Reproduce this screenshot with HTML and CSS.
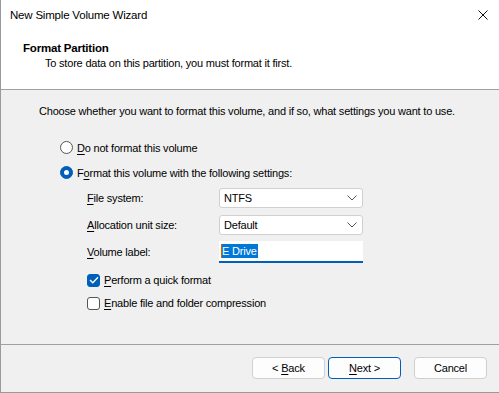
FILE: index.html
```html
<!DOCTYPE html>
<html lang="en">
<head>
  <meta charset="UTF-8" />
  <title>New Simple Volume Wizard</title>
  <link rel="stylesheet" href="styles.css">
</head>
<body>
  <div class="window">
    <div class="titlebar">
      <span class="title">New Simple Volume Wizard</span>
      <span class="close">
        <svg width="10" height="10" viewBox="0 0 10 10"><path d="M0.5 0.5 L9.5 9.5 M9.5 0.5 L0.5 9.5" stroke="#111" stroke-width="1"/></svg>
      </span>
    </div>
    <div class="header">
      <div class="page-title">Format Partition</div>
      <div class="page-sub">To store data on this partition, you must format it first.</div>
    </div>
    <div class="body">
      <p class="intro">Choose whether you want to format this volume, and if so, what settings you want to use.</p>
      <div class="options">
        <label class="radio-row">
          <span class="radio"></span>
          <span><u>D</u>o not format this volume</span>
        </label>
        <label class="radio-row">
          <span class="radio checked"></span>
          <span>F<u>o</u>rmat this volume with the following settings:</span>
        </label>
        <div class="settings">
          <div class="field">
            <span class="field-label"><u>F</u>ile system:</span>
            <div class="combo">NTFS <span class="chev"><svg width="10" height="6" viewBox="0 0 10 6"><path d="M0.5 0.5 L5 5 L9.5 0.5" fill="none" stroke="#555" stroke-width="1"/></svg></span></div>
          </div>
          <div class="field">
            <span class="field-label"><u>A</u>llocation unit size:</span>
            <div class="combo">Default <span class="chev"><svg width="10" height="6" viewBox="0 0 10 6"><path d="M0.5 0.5 L5 5 L9.5 0.5" fill="none" stroke="#555" stroke-width="1"/></svg></span></div>
          </div>
          <div class="field">
            <span class="field-label"><u>V</u>olume label:</span>
            <div class="textbox"><span class="caret"></span><span class="selected">E Drive</span></div>
          </div>
          <label class="check-row first">
            <span class="check checked">
              <svg width="10" height="8" viewBox="0 0 10 8"><path d="M1 4 L3.8 6.8 L9 1.2" fill="none" stroke="#fff" stroke-width="1.3"/></svg>
            </span>
            <span><u>P</u>erform a quick format</span>
          </label>
          <label class="check-row">
            <span class="check"></span>
            <span><u>E</u>nable file and folder compression</span>
          </label>
        </div>
      </div>
    </div>
    <div class="footer">
      <button class="btn">&lt; <u>B</u>ack</button>
      <button class="btn default"><u>N</u>ext &gt;</button>
      <button class="btn cancel">Cancel</button>
    </div>
  </div>
</body>
</html>
```

FILE: styles.css
```css
* { box-sizing: border-box; }
body {
  margin: 0;
  font-family: 'Liberation Sans', Arial, sans-serif;
  font-size: 11px;
  letter-spacing: -0.2px;
  color: #000;
  background: #f0f0f0;
}
u { text-decoration-thickness: 1px; text-underline-offset: 2px; }
.window {
  width: 499px;
  height: 393px;
  display: flex;
  flex-direction: column;
  border-left: 1px solid #9a9a9a;
  border-bottom: 1px solid #9a9a9a;
  background: #f0f0f0;
}
.titlebar {
  height: 32px;
  background: #fff;
  display: flex;
  align-items: center;
  justify-content: space-between;
  padding: 0 11px 2px 9px;
  font-size: 11.5px;
}
.close { display: flex; }
.header {
  height: 58px;
  background: #fff;
  border-bottom: 1px solid #a0a0a0;
  padding: 9px 0 0 22px;
}
.page-title { font-weight: bold; line-height: 15px; font-size: 11.5px; }
.page-sub { padding-left: 22px; line-height: 15px; }
.body {
  flex: 1;
  padding: 14px 0 0 38px;
  border-bottom: 1px solid #a0a0a0;
}
.intro { margin: 0 0 16px; line-height: 15px; white-space: nowrap; }
.options { padding-left: 21px; display: flex; flex-direction: column; }
.radio-row { display: flex; align-items: center; gap: 4px; height: 25px; }
.radio {
  width: 13px;
  height: 13px;
  border-radius: 50%;
  border: 1px solid #555;
  background: #fff;
  display: flex;
  align-items: center;
  justify-content: center;
}
.radio.checked { background: #005fb8; border-color: #005fb8; }
.radio.checked::after {
  content: '';
  width: 5px;
  height: 5px;
  border-radius: 50%;
  background: #fff;
}
.settings { padding-left: 27px; display: flex; flex-direction: column; gap: 1px; }
.field { display: flex; align-items: center; height: 26px; }
.field-label { width: 132px; }
.combo {
  width: 144px;
  height: 20px;
  background: #fff;
  border: 1px solid #d0d0d0;
  border-radius: 3px;
  display: flex;
  align-items: center;
  justify-content: space-between;
  padding: 0 5px 0 4px;
}
.chev { display: flex; }
.textbox {
  width: 144px;
  height: 22px;
  background: #fff;
  border-bottom: 2px solid #005fb8;
  display: flex;
  align-items: center;
  padding-left: 2px;
}
.caret { width: 1px; height: 14px; background: #e05a00; }
.selected { background: #0078d7; color: #fff; line-height: 14px; padding-right: 1px; }
.check-row { display: flex; align-items: center; gap: 4px; height: 22px; }
.check-row.first { margin-top: 3px; }
.check {
  width: 13px;
  height: 13px;
  border: 1px solid #555;
  border-radius: 3px;
  background: #fff;
  display: flex;
  align-items: center;
  justify-content: center;
}
.check.checked { background: #005fb8; border-color: #005fb8; }
.footer {
  height: 47px;
  display: flex;
  justify-content: flex-end;
  align-items: center;
  padding: 0 12px 1px 0;
  gap: 3px;
}
.btn {
  width: 73px;
  height: 22px;
  font-family: inherit;
  font-size: 11px;
  letter-spacing: -0.2px;
  background: #fdfdfd;
  border: 1px solid #d0d0d0;
  border-radius: 4px;
  padding: 0;
}
.btn.default { border-color: #005fb8; }
.btn.cancel { margin-left: 10px; }
```
